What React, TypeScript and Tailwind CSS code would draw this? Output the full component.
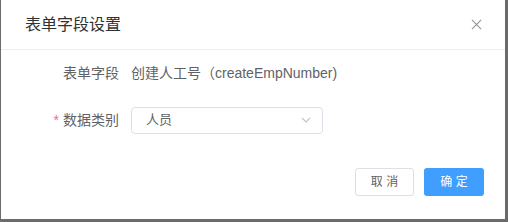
import React from 'react';

const font = { fontFamily: '"Liberation Sans", "Noto Sans CJK SC", sans-serif' };

export default function App() {
  return (
    <div className="w-[508px] h-[222px] bg-[#6b6b6b] pl-px pr-[3px] pb-[3px]" style={font}>
      <div className="h-full bg-white flex flex-col">
        {/* header */}
        <div className="h-[50px] border-b border-[#ebeef5] flex items-center justify-between pl-6 pr-[23px]">
          <span className="text-[16px] text-[#303133] leading-none">表单字段设置</span>
          <svg width="11" height="11" viewBox="0 0 12 12" className="text-[#909399]">
            <path d="M1 1 L11 11 M11 1 L1 11" stroke="currentColor" strokeWidth="1.2" fill="none" />
          </svg>
        </div>

        {/* body */}
        <div className="flex flex-col pt-[9px] text-[14px] text-[#606266]">
          <div className="flex items-center h-[28px]">
            <div className="w-[130px] pr-3 text-right">表单字段</div>
            <div>创建人工号（createEmpNumber)</div>
          </div>
          <div className="flex items-center h-[28px] mt-[19px]">
            <div className="w-[130px] pr-3 text-right">
              <span className="text-[#f56c6c] mr-1">*</span>数据类别
            </div>
            <div className="w-[192px] h-[27px] border border-[#dcdfe6] rounded flex items-center justify-between pl-[14px] pr-[10px] text-[13px] text-[#606266]">
              <span>人员</span>
              <svg width="12" height="12" viewBox="0 0 12 12" className="text-[#c0c4cc]">
                <path d="M2 4 L6 8 L10 4" stroke="currentColor" strokeWidth="1.1" fill="none" />
              </svg>
            </div>
          </div>
        </div>

        {/* footer */}
        <div className="flex justify-end gap-[10px] pr-[21px] mt-[34px]">
          <button className="w-[59px] h-[28px] border border-[#dcdfe6] rounded-[3px] text-[12px] text-[#606266] bg-white">
            取 消
          </button>
          <button className="w-[60px] h-[28px] rounded-[3px] text-[12px] text-white bg-[#409eff]">
            确 定
          </button>
        </div>
      </div>
    </div>
  );
}
